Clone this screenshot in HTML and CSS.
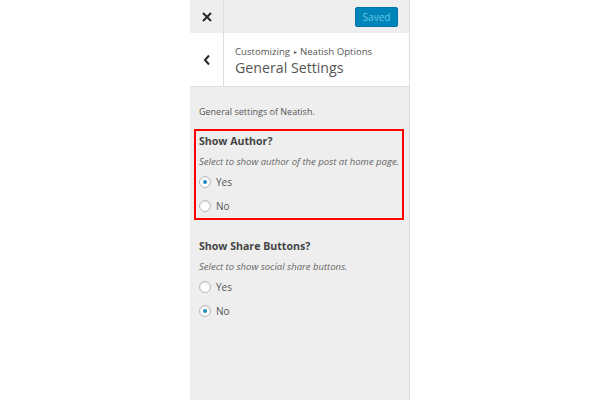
FILE: index.html
```html
<!DOCTYPE html>
<html>
<head>
<meta charset="utf-8">
<link rel="stylesheet" href="styles.css">
</head>
<body>
<div class="page">
  <div class="gutter"></div>
  <div class="panel">
    <div class="topbar">
      <div class="close">
        <svg width="10" height="10" viewBox="0 0 10 10"><path d="M1 1L9 9M9 1L1 9" stroke="#23282d" stroke-width="2"/></svg>
      </div>
      <div class="spacer"></div>
      <div class="saved">Saved</div>
    </div>
    <div class="header">
      <div class="back">
        <svg width="8" height="12" viewBox="0 0 8 12"><path d="M6 1.5L2 6L6 10.5" fill="none" stroke="#23282d" stroke-width="2"/></svg>
      </div>
      <div class="titles">
        <div class="crumb">Customizing <span class="sep">▸</span> Neatish Options</div>
        <div class="title">General Settings</div>
      </div>
    </div>
    <div class="content">
      <p class="desc">General settings of Neatish.</p>
      <div class="control highlight">
        <div class="label">Show Author?</div>
        <div class="help">Select to show author of the post at home page.</div>
        <div class="option"><span class="radio checked"></span>Yes</div>
        <div class="option"><span class="radio"></span>No</div>
      </div>
      <div class="control">
        <div class="label">Show Share Buttons?</div>
        <div class="help">Select to show social share buttons.</div>
        <div class="option"><span class="radio"></span>Yes</div>
        <div class="option"><span class="radio checked"></span>No</div>
      </div>
    </div>
  </div>
  <div class="rest"></div>
</div>
</body>
</html>
```
FILE: styles.css
```css
html, body {
  margin: 0;
  padding: 0;
  background: #fff;
  font-family: "Open Sans", "Noto Sans", sans-serif;
  color: #555;
}
.page {
  display: flex;
  height: 400px;
}
.gutter {
  width: 190px;
  flex: none;
}
.panel {
  width: 219px;
  flex: none;
  background: #eee;
  border-right: 1px solid #ddd;
}
.rest { flex: 1; }
.topbar {
  height: 33px;
  display: flex;
  align-items: center;
}
.close {
  width: 34px;
  height: 33px;
  box-sizing: border-box;
  border-right: 1px solid #ddd;
  display: flex;
  align-items: center;
  justify-content: center;
}
.spacer { flex: 1; }
.saved {
  width: 43px;
  height: 20px;
  box-sizing: border-box;
  margin-right: 11px;
  background: #0085ba;
  border: 1px solid #0073aa;
  border-radius: 2px;
  color: #66c6e4;
  font-size: 10px;
  line-height: 18px;
  text-align: center;
}
.header {
  height: 53px;
  background: #fff;
  display: flex;
  border-bottom: 1px solid #ddd;
}
.back {
  width: 34px;
  box-sizing: border-box;
  border-right: 1px solid #ddd;
  display: flex;
  align-items: center;
  justify-content: center;
}
.titles {
  padding: 12px 0 0 11px;
}
.crumb {
  font-size: 9.6px;
  line-height: 14px;
  color: #555;
  white-space: nowrap;
}
.sep {
  font-size: 6px;
  vertical-align: 1px;
  padding: 0 1px;
}
.title {
  font-size: 14.2px;
  line-height: 22px;
  margin-top: -2px;
  color: #555;
  font-weight: 400;
  white-space: nowrap;
}
.content {
  padding: 17px 5px 0 4px;
}
.desc {
  margin: 0 0 10px 5px;
  font-size: 9px;
  line-height: 15px;
}
.control {
  border: 2px solid transparent;
  padding: 2px 3px 0;
  margin-bottom: 14px;
}
.control.highlight {
  border-color: #f00;
}
.label {
  font-size: 10.6px;
  font-weight: 700;
  line-height: 16px;
  color: #444;
  white-space: nowrap;
}
.help {
  font-size: 9.5px;
  font-style: italic;
  line-height: 14px;
  margin-top: 6px;
  margin-bottom: 1px;
  color: #666;
  white-space: nowrap;
}
.option {
  display: flex;
  align-items: center;
  font-size: 10px;
  height: 24px;
  color: #555;
}
.radio {
  width: 10px;
  height: 10px;
  border: 1px solid #b4b9be;
  border-radius: 50%;
  background: #fff;
  margin: 0 5px 0 0;
  box-shadow: inset 0 1px 2px rgba(0,0,0,0.1);
  display: flex;
  align-items: center;
  justify-content: center;
}
.radio.checked::after {
  content: "";
  width: 4px;
  height: 4px;
  border-radius: 50%;
  background: #1e8cbe;
}
```
